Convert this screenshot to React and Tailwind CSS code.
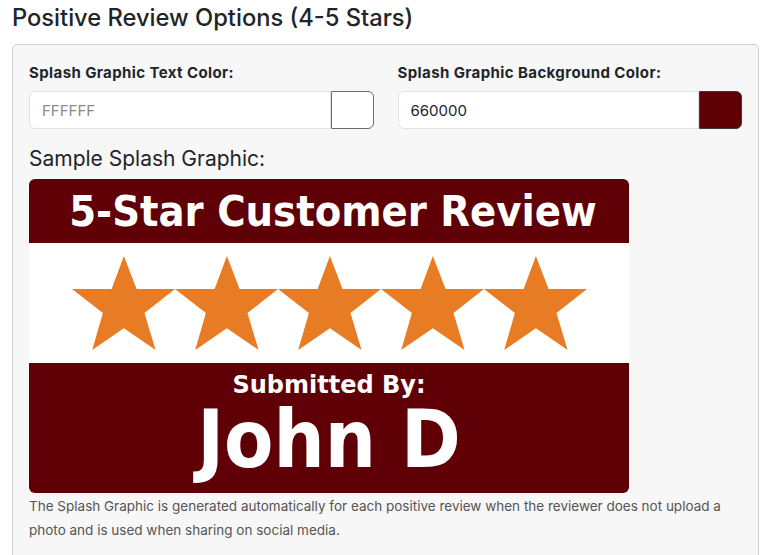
import React from 'react';

const STAR_POINTS = '131,0 163,98 260,98 183,170 211,280 131,215 51,280 78,170 0,98 100,98';

function Star() {
  return (
    <svg viewBox="0 0 260 280" preserveAspectRatio="none" className="w-[103px] h-[94px] shrink-0">
      <polygon points={STAR_POINTS} fill="#e87c24" />
    </svg>
  );
}

function ColorField({ label, value, placeholder, swatch, swatchBorder }) {
  return (
    <div>
      <label className="block text-[15px] leading-[20px] font-bold tracking-[0.4px] text-[#212529] mb-[8px]">{label}</label>
      <div className="flex h-[38px]">
        <input
          type="text"
          defaultValue={value}
          placeholder={placeholder}
          className="flex-1 min-w-0 h-full bg-white border border-[#dee2e6] rounded-l-[6px] px-3 text-[15px] text-[#212529] placeholder-[#8a8a8a] outline-none"
        />
        <div className={`w-[43px] h-full rounded-r-[6px] border ${swatchBorder} ${swatch}`}></div>
      </div>
    </div>
  );
}

export default function App() {
  return (
    <div className="min-h-screen bg-white px-3 pt-[3px] font-['Inter',sans-serif] text-[#212529]">
      <h2 className="text-[23.7px] leading-[29px] font-medium">Positive Review Options (4-5 Stars)</h2>

      <div className="mt-[12px] bg-[#f7f7f7] border border-[#cfcfcf] rounded-[5px] px-4 pt-[18px] pb-10">
        <div className="grid grid-cols-2 gap-6">
          <ColorField label="Splash Graphic Text Color:" placeholder="FFFFFF" swatch="bg-white" swatchBorder="border-[#6b6b6b]" />
          <ColorField label="Splash Graphic Background Color:" value="660000" swatch="bg-[#5e0005]" swatchBorder="border-[#3a3a3a]" />
        </div>

        <div className="mt-[17px] text-[21px] leading-[26px]">Sample Splash Graphic:</div>

        {/* splash graphic preview */}
        <div className="mt-[7px] w-[600px] h-[314px] rounded-[6px] overflow-hidden flex flex-col font-['DejaVu_Sans_Condensed','DejaVu_Sans',sans-serif] font-bold text-white">
          <div className="h-[64px] bg-[#5e0005] flex items-center justify-center pl-2">
            <span className="text-[43px] leading-none">5-Star Customer Review</span>
          </div>
          <div className="h-[120px] bg-white flex items-center justify-center">
            <Star />
            <Star />
            <Star />
            <Star />
            <Star />
          </div>
          <div className="flex-1 bg-[#5e0005] flex flex-col items-center pt-[9px]">
            <span className="font-['DejaVu_Sans',sans-serif] text-[24px] leading-[26px]">Submitted By:</span>
            <span className="mt-[2px] text-[80px] leading-[80px]">John D</span>
          </div>
        </div>

        <p className="mt-[1px] text-[13.5px] leading-[24px] text-[#555]">
          The Splash Graphic is generated automatically for each positive review when the reviewer does not upload a photo and is used when sharing on social media.
        </p>
      </div>
    </div>
  );
}
